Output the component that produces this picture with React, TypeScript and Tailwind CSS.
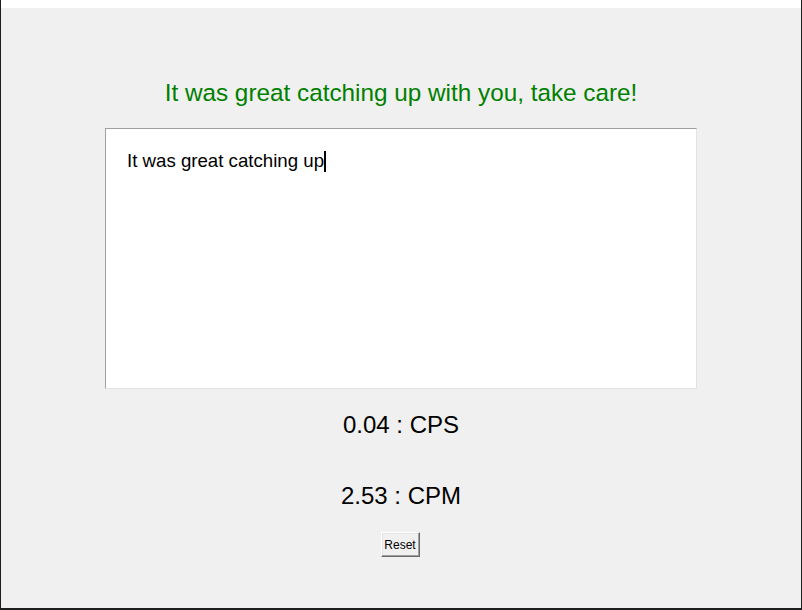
export default function App() {
  return (
    <div className="w-[802px] h-[610px] flex flex-col bg-white font-['Liberation_Sans',Arial,sans-serif] overflow-hidden">
      <div className="h-2 bg-white border-x border-[#1e1e1e]" />
      <div className="flex-1 flex flex-col items-center bg-[#f0f0f0] border-x border-b-2 border-[#1e1e1e]">
        <h1 className="pt-[71px] text-[24.3px] leading-[28px] text-[#008000]">
          It was great catching up with you, take care!
        </h1>

        <div className="mt-[21px] w-[592px] h-[261px] bg-white border border-t-[#a0a0a0] border-l-[#a0a0a0] border-r-[#e3e3e3] border-b-[#e3e3e3] pl-[21px] pt-[21px]">
          <p className="text-[18.67px] leading-[22px] text-black flex items-center">
            It was great catching up
            <span className="inline-block w-[2px] h-[21px] bg-black" />
          </p>
        </div>

        <div className="mt-[22px] text-[24px] leading-[28px] text-black">0.04 : CPS</div>
        <div className="mt-[43px] text-[24px] leading-[28px] text-black">2.53 : CPM</div>

        <button className="mt-[22px] mr-[2px] w-[39px] h-[25px] bg-[#f0f0f0] text-[12px] text-black border border-t-white border-l-white border-r-[#696969] border-b-[#696969] shadow-[inset_-1px_-1px_0_#a0a0a0,inset_1px_1px_0_#e3e3e3] flex items-center justify-center">
          Reset
        </button>
      </div>
    </div>
  );
}
